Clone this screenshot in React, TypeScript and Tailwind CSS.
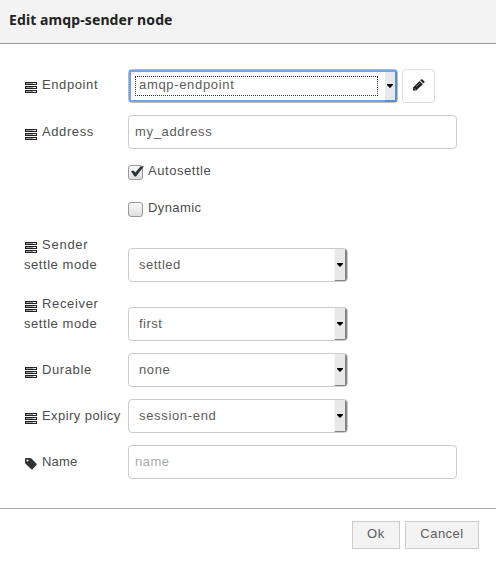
import React from "react";

function ListIcon() {
  return (
    <svg width="12" height="11" viewBox="0 0 12 11" className="shrink-0" shapeRendering="crispEdges">
      {[0, 4, 8].map((y) => (
        <g key={y}>
          <rect x="0" y={y} width="12" height="3" fill="#222" />
          <rect x="1" y={y + 1} width="7" height="1" fill="#999" />
          <rect x="8" y={y + 1} width="3" height="1" fill="#eee" />
        </g>
      ))}
    </svg>
  );
}

function TagIcon() {
  return (
    <svg width="12" height="12" viewBox="0 0 12 12" className="shrink-0">
      <path fillRule="evenodd" d="M0 0.8 Q0 0 .8 0H5Q5.8 0 6.4.6L11.5 5.7Q12 6.3 11.5 7L7.5 11.3Q7 11.8 6.3 11.3L.8 6Q0 5.2 0 4.5ZM2.5 1.4A1 1 0 1 0 2.5 3.4A1 1 0 1 0 2.5 1.4Z" fill="#333" />
    </svg>
  );
}

function Label({ first, second, tag, tracking = "" }: { first: string; second?: string; tag?: boolean; tracking?: string }) {
  return (
    <div className="w-[104px] shrink-0 leading-5 whitespace-nowrap">
      <div className="flex h-5 gap-[6px]">
        <span className={"ml-px -mr-px flex w-3 " + (tag ? "pt-[6px]" : "pt-[7px]")}>{tag ? <TagIcon /> : <ListIcon />}</span>
        <span className={tracking}>{first}</span>
      </div>
      {second && <div className="tracking-[0.55px]">{second}</div>}
    </div>
  );
}

function Arrow() {
  return (
    <svg width="6" height="4" viewBox="0 0 6 4">
      <path d="M0 0H6V1L3 4L0 1Z" fill="#000" />
    </svg>
  );
}

function Select({ value, tracking }: { value: string; tracking: string }) {
  return (
    <div className="flex h-[34px] w-[220px] overflow-hidden rounded-[4px] border border-[#ccc] pl-[10px] text-[#5c5c5c]">
      <span className={"flex-1 leading-8 " + tracking}>{value}</span>
      <span className="-mb-px flex w-[13px] items-center justify-center border-r-2 border-b-2 border-l border-r-[#858585] border-b-[#858585] border-l-[#f6f6f6] bg-[#e8e8e8]">
        <Arrow />
      </span>
    </div>
  );
}

function Check({ checked, label, tracking }: { checked?: boolean; label: string; tracking: string }) {
  return (
    <div className="flex h-5 pl-[104px] leading-5">
      <span className="mt-1 h-[15px] w-[15px] rounded-[3px] border border-[#999] bg-linear-to-b from-[#fafafa] to-[#dedede]">
        {checked && (
          <svg width="15" height="13" viewBox="0 0 15 13" className="overflow-visible">
            <path d="M2 5.2L4.5 4.5L6.3 6.6L11.5 .5L15 .2L7 10.5H5.5Z" fill="#2b3436" />
          </svg>
        )}
      </span>
      <span className={"ml-[5px] " + tracking}>{label}</span>
    </div>
  );
}

export default function App() {
  return (
    <div className="flex h-[563px] w-[496px] flex-col bg-white font-['Liberation_Sans',Arial,sans-serif] text-[13px] text-[#4c4c4c]">
      <header className="h-11 border-b border-[#999] bg-[#f3f3f3] pl-[9px] font-['Noto_Sans',sans-serif] text-[14px] leading-10 font-bold tracking-[0.1px] text-[#222]">
        Edit amqp-sender node
      </header>
      <main className="flex h-[465px] flex-col border-b border-[#aaa] pt-[25px] pl-6">
        <div className="flex h-[34px]">
          <div className="pt-[6px]"><Label first="Endpoint" tracking="tracking-[0.6px]" /></div>
          <div className="flex h-[34px] w-[270px] rounded-[4px] border border-[#bbb]">
            <div className="flex flex-1 border-2 border-[#72a5e8] pl-1">
              <div className="mt-[4px] h-5 w-[243px] border border-dotted border-[#333] pl-[3px] leading-4 tracking-[0.67px] text-[#5c5c5c]">amqp-endpoint</div>
              <div className="-mr-[2px] -mb-[2px] ml-auto flex w-3 items-center justify-center border-r-2 border-b-2 border-[#5a8fd4] bg-[#e8e8e8]"><Arrow /></div>
            </div>
          </div>
          <div className="ml-1 flex h-[34px] w-[33px] items-center justify-center rounded-[4px] border border-[#ddd]">
            <svg width="12" height="12" viewBox="0 0 12 12" className="-mt-[3px]">
              <path d="M0 11.5V8.5L6.5 2L9.8 5.2L3.2 11.5ZM7.2 1.3L8.3.3Q8.8 0 9.4.5L11.4 2.5Q11.9 3.1 11.3 3.7L10.4 4.5Z" fill="#222" />
              <path d="M1.2 9.2L2.8 10.7M3 7.8L7 3.8" stroke="#aaa" strokeWidth=".8" />
            </svg>
          </div>
        </div>
        <div className="mt-3 flex h-[34px]">
          <div className="pt-[7px]"><Label first="Address" tracking="tracking-[0.6px]" /></div>
          <div className="h-[34px] w-[329px] rounded-[4px] border border-[#ccc] pl-[6px] leading-8 tracking-[0.65px] text-[#5c5c5c]">my_address</div>
        </div>
        <div className="mt-3"><Check checked label="Autosettle" tracking="tracking-[0.55px]" /></div>
        <div className="mt-[17px]"><Check label="Dynamic" tracking="tracking-[0.4px]" /></div>
        <div className="mt-4 flex h-12 items-end">
          <div className="h-12 pt-px"><Label first="Sender" second="settle mode" tracking="tracking-[0.75px]" /></div>
          <Select value="settled" tracking="tracking-[0.5px]" />
        </div>
        <div className="mt-[11px] flex h-12 items-end">
          <div className="h-12 pt-px"><Label first="Receiver" second="settle mode" tracking="tracking-[0.65px]" /></div>
          <Select value="first" tracking="tracking-[0.5px]" />
        </div>
        <div className="mt-3 flex h-[34px]">
          <div className="pt-[7px]"><Label first="Durable" tracking="tracking-[0.6px]" /></div>
          <Select value="none" tracking="tracking-[0.6px]" />
        </div>
        <div className="mt-3 flex h-[34px]">
          <div className="pt-[7px]"><Label first="Expiry policy" tracking="tracking-[0.43px]" /></div>
          <Select value="session-end" tracking="tracking-[0.67px]" />
        </div>
        <div className="mt-3 flex h-[34px]">
          <div className="pt-[7px]"><Label first="Name" tag tracking="tracking-[0.2px]" /></div>
          <div className="h-[34px] w-[329px] rounded-[4px] border border-[#ccc] pl-[6px] leading-8 tracking-[0.5px] text-[#aaa]">name</div>
        </div>
      </main>
      <footer className="flex justify-end gap-[5px] pt-3 pr-[17px] leading-6 text-[#5c5c5c]">
        <div className="h-7 w-12 border border-[#ccc] bg-[#f3f3f3] text-center tracking-[0.7px]">Ok</div>
        <div className="h-7 w-[74px] border border-[#ccc] bg-[#f3f3f3] text-center tracking-[0.5px]">Cancel</div>
      </footer>
    </div>
  );
}
